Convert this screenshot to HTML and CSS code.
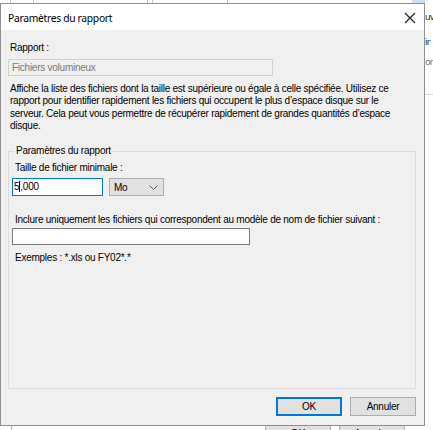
FILE: index.html
```html
<!DOCTYPE html>
<html lang="fr">
<head>
<meta charset="utf-8">
<title>Paramètres du rapport</title>
<link rel="stylesheet" href="styles.css">
</head>
<body>
<div class="desktop">
  <div class="bg-app">
    <div class="bg-top">
      <span class="bg-vline l1"></span>
      <span class="bg-vline l2"></span>
      <span class="bg-vline l3"></span>
      <span class="bg-vline l4"></span>
      <span class="bg-vline l5"></span>
      <span class="bg-sel"></span>
    </div>
    <div class="bg-side">
      <div class="bg-item i1">uv</div>
      <div class="bg-item i2">ir</div>
      <div class="bg-item i3 dim">or</div>
      <div class="bg-hline"></div>
    </div>
    <div class="bg-bottom">
      <span class="bg-btn b1">OK</span>
      <span class="bg-btn b2">Annuler</span>
    </div>
  </div>

  <div class="dialog">
    <div class="titlebar">
      <span class="title">Paramètres du rapport</span>
      <svg class="close" width="12" height="12" viewBox="0 0 12 12" aria-hidden="true">
        <path d="M1 1 L11 11 M11 1 L1 11" stroke="#1a1a1a" stroke-width="1.1" fill="none"/>
      </svg>
    </div>
    <div class="body">
      <div class="label first">Rapport :</div>
      <div class="field disabled">Fichiers volumineux</div>
      <p class="desc">Affiche la liste des fichiers dont la taille est supérieure ou égale à celle spécifiée. Utilisez ce<br>rapport pour identifier rapidement les fichiers qui occupent le plus d’espace disque sur le<br>serveur. Cela peut vous permettre de récupérer rapidement de grandes quantités d’espace<br>disque.</p>
      <fieldset class="group">
        <legend class="legend">Paramètres du rapport</legend>
        <div class="label">Taille de fichier minimale :</div>
        <div class="row">
          <div class="field focus">5<span class="caret"></span>,000</div>
          <div class="combo">
            <span>Mo</span>
            <svg class="chev" width="9" height="5" viewBox="0 0 9 5" aria-hidden="true">
              <path d="M0.5 0.5 L4.5 4.5 L8.5 0.5" stroke="#606060" stroke-width="1" fill="none"/>
            </svg>
          </div>
        </div>
        <div class="label second">Inclure uniquement les fichiers qui correspondent au modèle de nom de fichier suivant :</div>
        <div class="field pattern"></div>
        <div class="label third">Exemples : *.xls ou FY02*.*</div>
      </fieldset>
      <div class="buttons">
        <span class="btn default">OK</span>
        <span class="btn">Annuler</span>
      </div>
    </div>
  </div>
</div>
</body>
</html>
```

FILE: styles.css
```css
html, body {
  margin: 0;
  padding: 0;
}
body {
  background: #ffffff;
  font-family: "Liberation Sans", Arial, sans-serif;
  font-size: 10px;
  letter-spacing: -0.25px;
  color: #000;
}
.desktop {
  position: relative;
  width: 433px;
  height: 430px;
  overflow: hidden;
  background: #ffffff;
}

/* background application (mostly hidden behind the dialog) */
.bg-app {
  position: absolute;
  inset: 0;
}
.bg-top {
  position: absolute;
  left: 0;
  top: 0;
  width: 433px;
  height: 4px;
  background: #ffffff;
}
.bg-vline {
  position: absolute;
  top: 0;
  width: 1px;
  height: 4px;
  background: #c8c8c8;
}
.bg-vline.l1 { left: 10px; }
.bg-vline.l2 { left: 33px; }
.bg-vline.l3 { left: 147px; }
.bg-vline.l4 { left: 152px; }
.bg-vline.l5 { left: 227px; }
.bg-sel {
  position: absolute;
  left: 412px;
  top: 0;
  width: 21px;
  height: 3px;
  background: #cfe0f2;
  border-bottom: 1px solid #4a6a95;
}
.bg-side {
  position: absolute;
  left: 425px;
  top: 0;
  width: 8px;
  height: 430px;
  overflow: hidden;
  background: #ffffff;
}
.bg-item {
  position: absolute;
  left: 0;
  font-family: "Noto Sans", sans-serif;
  font-size: 9px;
  letter-spacing: -0.6px;
  white-space: nowrap;
  color: #1a1a1a;
}
.bg-item.i1 { top: 10px; }
.bg-item.i2 { top: 35px; }
.bg-item.i3 { top: 55px; }
.bg-item.dim { color: #707070; }
.bg-hline {
  position: absolute;
  left: 0;
  top: 94px;
  width: 8px;
  height: 1px;
  background: #dcdcdc;
}
.bg-bottom {
  position: absolute;
  left: 0;
  top: 420px;
  width: 433px;
  height: 10px;
}
.bg-bottom::before, .bg-bottom::after {
  content: "";
  position: absolute;
  top: 0;
  width: 1px;
  height: 10px;
  background: #b0b0b0;
}
.bg-bottom::before { left: 11px; }
.bg-bottom::after { left: 404px; }
.bg-btn {
  position: absolute;
  top: 0;
  height: 20px;
  box-sizing: border-box;
  border: 1px solid #adadad;
  background: #e1e1e1;
  text-align: center;
  line-height: 24px;
  font-size: 11px;
}
.bg-btn.b1 { left: 265px; width: 66px; }
.bg-btn.b2 { left: 339px; width: 66px; }

/* dialog window */
.dialog {
  position: absolute;
  left: 0;
  top: 3px;
  width: 425px;
  height: 423px;
  box-sizing: border-box;
  border: 1px solid #8f8f8f;
  display: flex;
  flex-direction: column;
  background: #f0f0f0;
}
.titlebar {
  height: 26px;
  flex: none;
  background: #ffffff;
  display: flex;
  align-items: center;
  justify-content: space-between;
  padding: 0 8px 0 7px;
}
.title {
  font-family: "Noto Sans", "Liberation Sans", sans-serif;
  font-size: 10.3px;
  letter-spacing: -0.3px;
  color: #000;
  padding-top: 1px;
}
.close {
  display: block;
  margin-top: 1px;
}
.body {
  flex: 1;
  display: flex;
  flex-direction: column;
  padding: 12px 8px 0 7px;
}
.label {
  line-height: 12px;
  padding-left: 2px;
  white-space: nowrap;
}
.field {
  box-sizing: border-box;
  height: 17px;
  line-height: 15px;
  padding: 0 3px;
  border: 1px solid #7a7a7a;
  background: #ffffff;
  white-space: nowrap;
}
.field.disabled {
  margin-top: 5px;
  width: 265px;
  border-color: #d2d2d2;
  background: #f0f0f0;
  color: #7a7a7a;
}
.desc {
  margin: 7px 0 0 0;
  padding-left: 2px;
  line-height: 12.3px;
  white-space: nowrap;
}
.group {
  margin: 13px 0 0 0;
  padding: 5px 6px 0 3px;
  border: 1px solid #dcdcdc;
  height: 244px;
  box-sizing: border-box;
  min-width: 0;
}
.legend {
  padding: 0 2px;
  margin-left: 2px;
  line-height: 12px;
}
.group .label {
  padding-left: 3px;
}
.row {
  display: flex;
  gap: 6px;
  margin-top: 4px;
}
.field.focus {
  width: 91px;
  height: 18px;
  border-color: #0078d7;
  line-height: 16px;
  padding-left: 1px;
}
.caret {
  display: inline-block;
  width: 1px;
  height: 11px;
  background: #000;
  vertical-align: -2px;
}
.combo {
  box-sizing: border-box;
  width: 55px;
  height: 18px;
  border: 1px solid #adadad;
  background: #e1e1e1;
  display: flex;
  align-items: center;
  justify-content: space-between;
  padding: 0 5px 0 4px;
}
.label.second {
  margin-top: 18px;
}
.field.pattern {
  margin-top: 2px;
  width: 238px;
}
.label.third {
  margin-top: 7px;
}
.buttons {
  display: flex;
  justify-content: flex-end;
  gap: 8px;
  margin-top: 8px;
}
.btn {
  box-sizing: border-box;
  width: 66px;
  height: 19px;
  border: 1px solid #adadad;
  background: #e1e1e1;
  display: flex;
  align-items: center;
  justify-content: center;
}
.btn.default {
  border: 2px solid #0078d7;
}
```
